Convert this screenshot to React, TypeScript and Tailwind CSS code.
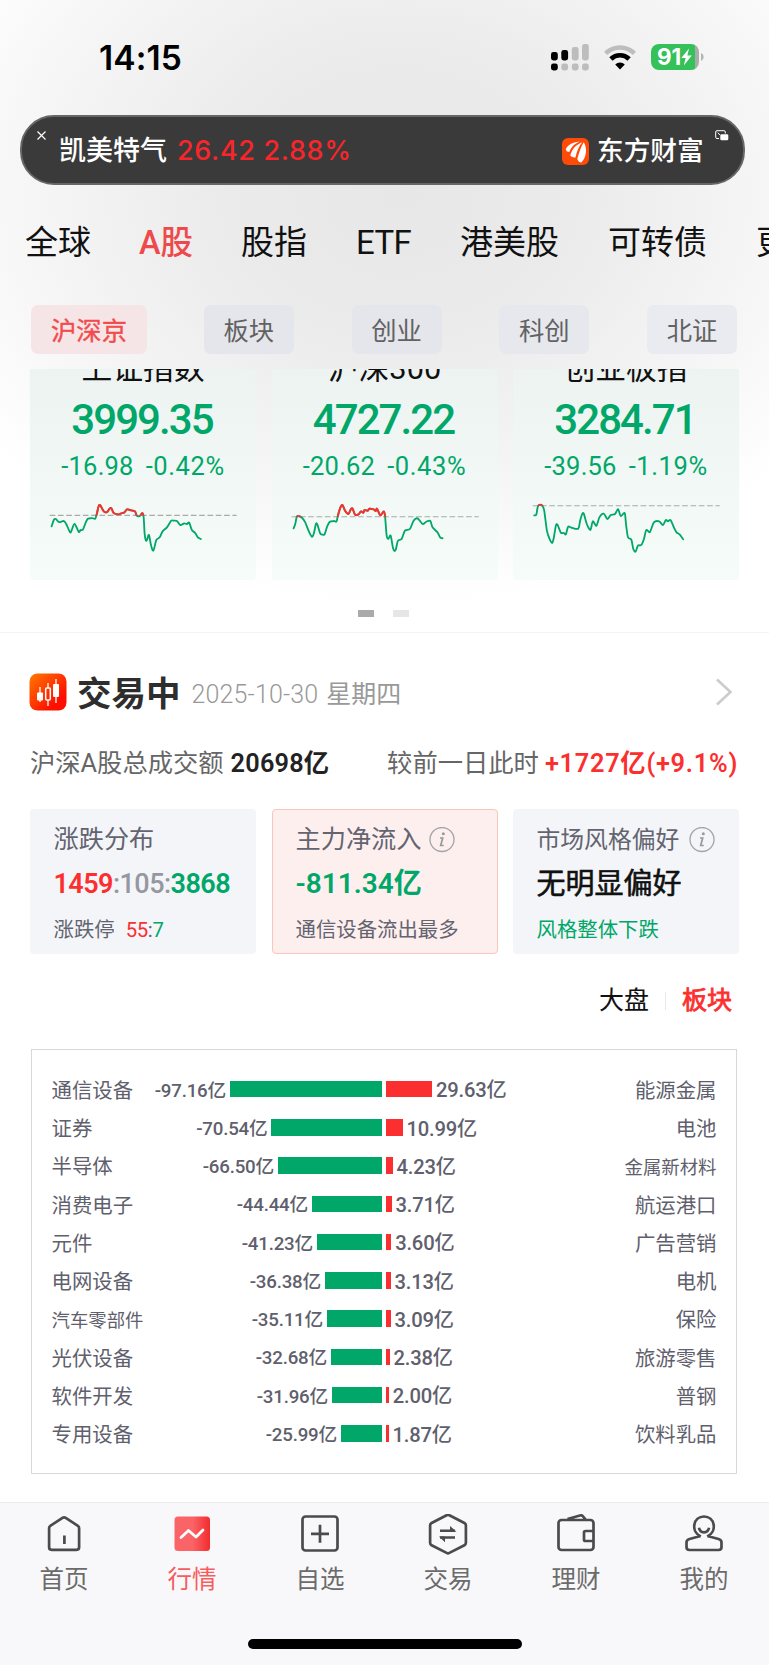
import React from 'react'

const categories = [
    { name: '全球', style: 'ml-[25px] w-[66px]' },
    { name: 'A股', style: 'ml-[48px] w-[54px] font-medium text-[32.500px] text-[#ee4a4c]' },
    { name: '股指', style: 'ml-[48px] w-[66px]' },
    { name: 'ETF', style: 'ml-[49px] w-[57px] tracking-[-0.6px]' },
    { name: '港美股', style: 'ml-[47px] w-[99px]' },
    { name: '可转债', style: 'ml-[49px] w-[99px]' },
    { name: '更多', style: 'ml-[49px] w-[66px]' },
];

const indices = [
    {
        name: '上证指数', price: '3999.35', change: '-16.98', percent: '-0.42%', left: 88, base: 464,
        points: '153,497 160,477 166,475 175,484 190,481 197,490 208,514 212,512 222,490 235,514 240,508 247,507 255,487 262,474 275,472 284,474 289,460 294,438 299,433 310,452 320,454 328,443 333,443 340,457 353,461 362,458 372,455 380,446 392,449 404,452 409,465 418,466 426,457 430,470 433,520 437,540 441,535 446,523 452,553 458,570 462,562 468,538 478,530 487,512 500,500 513,480 520,480 530,481 540,493 552,488 560,490 567,486 575,508 585,517 593,530 602,535',
    },
    {
        name: '沪深300', price: '4727.22', change: '-20.62', percent: '-0.43%', left: 812, base: 468,
        points: '877,503 882,490 886,470 890,466 902,471 912,485 922,510 932,528 938,518 944,490 948,490 956,516 960,521 970,521 978,497 986,483 998,481 1006,482 1011,462 1018,440 1024,433 1032,450 1042,460 1048,448 1054,443 1062,462 1072,461 1080,452 1087,456 1090,448 1100,450 1105,444 1118,446 1124,451 1128,444 1138,464 1148,452 1152,465 1157,525 1162,535 1169,525 1176,562 1181,571 1185,565 1191,540 1202,535 1212,510 1227,505 1238,480 1250,473 1265,490 1275,484 1288,480 1295,500 1310,515 1318,530 1325,533',
    },
    {
        name: '创业板指', price: '3284.71', change: '-39.56', percent: '-1.19%', left: 396, base: 435,
        points: '460,464 466,462 470,440 474,433 484,435 490,450 498,510 506,535 514,547 519,530 525,495 530,492 540,516 549,517 555,521 562,498 572,501 592,504 598,480 604,460 609,459 618,490 629,508 636,482 647,495 656,470 669,459 680,475 690,463 703,460 712,445 720,466 732,457 736,490 742,530 752,537 758,565 765,573 772,555 782,553 790,535 797,508 808,514 820,485 836,482 847,493 856,478 862,482 870,478 880,500 888,515 898,522 908,536',
    },
];

const flows = [
    { out: '通信设备', outValue: '-97.16亿', outBar: 152, inBar: 46.5, inValue: '29.63亿', name: '能源金属' },
    { out: '证券', outValue: '-70.54亿', outBar: 110.5, inBar: 17, inValue: '10.99亿', name: '电池' },
    { out: '半导体', outValue: '-66.50亿', outBar: 104, inBar: 7, inValue: '4.23亿', name: '金属新材料' },
    { out: '消费电子', outValue: '-44.44亿', outBar: 70, inBar: 6, inValue: '3.71亿', name: '航运港口' },
    { out: '元件', outValue: '-41.23亿', outBar: 65, inBar: 5.7, inValue: '3.60亿', name: '广告营销' },
    { out: '电网设备', outValue: '-36.38亿', outBar: 57, inBar: 5, inValue: '3.13亿', name: '电机' },
    { out: '汽车零部件', outValue: '-35.11亿', outBar: 55, inBar: 5, inValue: '3.09亿', name: '保险' },
    { out: '光伏设备', outValue: '-32.68亿', outBar: 51, inBar: 4, inValue: '2.38亿', name: '旅游零售' },
    { out: '软件开发', outValue: '-31.96亿', outBar: 50, inBar: 3.3, inValue: '2.00亿', name: '普钢' },
    { out: '专用设备', outValue: '-25.99亿', outBar: 41, inBar: 3, inValue: '1.87亿', name: '饮料乳品' },
];

// smooth curve through every point
const toPath = (points: string) => {
    const p = points.split(' ').map((s) => s.split(',').map(Number));
    let d = `M${p[0][0]} ${p[0][1]}`;
    for (let i = 0; i < p.length - 1; i++) {
        const a = p[i - 1] || p[i];
        const b = p[i];
        const c = p[i + 1];
        const e = p[i + 2] || c;
        d += `C${b[0] + (c[0] - a[0]) / 7} ${b[1] + (c[1] - a[1]) / 7} ${c[0] - (e[0] - b[0]) / 7} ${c[1] - (e[1] - b[1]) / 7} ${c[0]} ${c[1]}`;
    }
    return d;
};

const StatusBar = () => (
    <div className="flex h-[115px] items-start">
        <div className="ml-[99px] mt-[41px] w-[84px] text-[33.500px] font-semibold leading-[34px] tracking-[0.1px] text-black font-['Inter']">14:15</div>
        <svg className="ml-[368px] mt-[43px]" width="38" height="28" viewBox="0 0 38 28">
            <g fill="#000">
                <rect x="0" y="9" width="6.8" height="8.5" rx="2.4" />
                <rect x="10.3" y="7" width="6.8" height="10.5" rx="2.4" />
                <rect x="0" y="20.5" width="6.8" height="7" rx="2.4" />
            </g>
            <g fill="#bdbdbd">
                <rect x="20.8" y="4" width="6.8" height="13.5" rx="2.4" />
                <rect x="31" y="1" width="6.8" height="16.5" rx="2.4" />
                <rect x="10.3" y="20.5" width="6.8" height="7" rx="2.4" />
                <rect x="20.8" y="20.5" width="6.8" height="7" rx="2.4" />
                <rect x="31" y="20.5" width="6.8" height="7" rx="2.4" />
            </g>
        </svg>
        <svg className="ml-[15px] mt-[44px]" width="32" height="26" viewBox="0 0 32 26" fill="none">
            <path d="M1.6 9.4a20.5 20.5 0 0 1 28.8 0" stroke="#bdbdbd" strokeWidth="4.6" />
            <path d="M6.9 15a12.9 12.9 0 0 1 18.2 0" stroke="#000" strokeWidth="4.6" />
            <path d="M16 25.5l-4.8-5a6.8 6.8 0 0 1 9.6 0z" fill="#000" />
        </svg>
        <div className="ml-[15px] mt-[44px] flex h-[26px] w-[48px] items-center overflow-hidden rounded-[8px] bg-[linear-gradient(to_right,#34c159_91%,#a9acaa_91%)] pl-[6px]">
            <span className="text-[22.500px] font-bold leading-[26px] tracking-[-0.2px] text-white font-['Inter']">91</span>
            <svg width="11" height="18" viewBox="0 0 11 18">
                <path d="M8 .5L.3 10h4.3L2.800 17.500 10.800 7.600H6.400z" fill="#fff" />
            </svg>
        </div>
        <svg className="ml-[2px] mt-[53px]" width="3" height="8" viewBox="0 0 3 8">
            <path d="M0 0a4.300 4.300 0 0 1 0 8z" fill="#b5b5b5" />
        </svg>
    </div>
);

const TickerPill = () => (
    <div className="ml-5 flex h-[70px] w-[725px] items-start rounded-[34px] border-2 border-[#666] bg-[#3a3a3a] text-white">
        <svg className="ml-[15px] mt-[14px]" width="9" height="9" viewBox="0 0 9 9" stroke="#fff" strokeWidth="1.2">
            <path d="M.5 .5l8 8M8.500 .5l-8 8" />
        </svg>
        <div className="ml-[13px] mt-[16px] w-[118px] text-[27px] font-medium leading-[36px]">凯美特气</div>
        <div className="mt-[16px] w-[385px] text-[27px] font-medium leading-[36px] tracking-[0.65px] text-[#f8262a] font-['Inter']">26.42 2.88%</div>
        <svg className="mt-[21px]" width="27" height="27" viewBox="0 0 27 27">
            <rect width="27" height="27" rx="6" fill="#ff4a08" />
            <g fill="#fff">
                <path d="M3.800 11C6.500 6 12 3.700 18 3.700C13 5 9.500 8.500 7.300 14C5.300 14 3.900 13 3.800 11z" />
                <path d="M8.300 17.500C10 11 14 6.500 20.300 4.200C17 8 14.800 13 13.500 19.500C11.500 19.500 9.500 19 8.300 17.500z" />
                <path d="M15.300 21C17.300 14 18.800 8.500 21.800 4.200C25.200 10 25 18.500 19.300 24.500C17.500 24.300 15.800 23 15.300 21z" />
            </g>
        </svg>
        <div className="ml-[8px] mt-[16px] w-[108px] text-[26.700px] font-medium leading-[36px]">东方财富</div>
        <svg className="ml-[10px] mt-[13px]" width="14" height="11" viewBox="0 0 14 11">
            <path d="M4 8.500H2a1.300 1.300 0 0 1-1.300-1.300V2A1.300 1.300 0 0 1 2 .7h7A1.300 1.300 0 0 1 10.300 2v1.500M2.700 2.700l2.300 2.300" fill="none" stroke="#fff" />
            <rect x="5.300" y="4.300" width="8" height="6" rx="1.300" fill="#fff" />
        </svg>
    </div>
);

const IndexCard = ({ item }: { item: (typeof indices)[0] }) => (
    <div className="h-[211px] w-[226px] overflow-hidden rounded-b-[4px] bg-gradient-to-b from-[#edf3f1] to-[#f5fcf9] text-center text-[#00a768]">
        <div className="-mt-[15.500px] h-[30px] text-[30.800px] leading-[30px] text-[#111]">{item.name}</div>
        <div className="mt-[15px] h-[42px] text-[42px] font-medium leading-[42px] tracking-[-1.9px]"><span className="ml-[-2px]">{item.price}</span></div>
        <div className="mt-[12px] flex h-[26px] justify-center gap-[12px] text-[25.500px] leading-[26px] tracking-[0.2px]">
            <span>{item.change}</span>
            <span className="tracking-[0.6px]">{item.percent}</span>
        </div>
        <svg className="mt-[10px]" width="226" height="87" viewBox={`${item.left} 385 680 261`} fill="none">
            <clipPath id={`up${item.left}`}>
                <rect x={item.left} y="385" width="680" height={item.base - 385} />
            </clipPath>
            <path d={`M${item.left + 59} ${item.base}h563`} stroke="#aaa" strokeWidth="3.500" strokeDasharray="17 8" />
            <path d={toPath(item.points)} stroke="#00a768" strokeWidth="5.500" strokeLinecap="round" />
            <path d={toPath(item.points)} stroke="#fc2f2f" strokeWidth="6" strokeLinecap="round" clipPath={`url(#up${item.left})`} />
        </svg>
    </div>
);

const InfoIcon = () => (
    <svg width="26" height="26" viewBox="0 0 26 26" fill="none" stroke="#a3a3a8">
        <circle cx="13" cy="12.500" r="12" strokeWidth="1.300" />
        <circle cx="14.300" cy="6.700" r="1.500" fill="#999" stroke="none" />
        <path d="M11 11h2.700l-2 7.500h3" strokeWidth="1.700" stroke="#999" />
    </svg>
);

const tabs = [
    {
        label: '首页',
        icon: <path d="M4.500 14c0-1 .4-1.700 1.200-2.200l12.200-8a3 3 0 0 1 3.200 0l12.200 8c.8.500 1.200 1.200 1.200 2.200v19.300c0 1.500-.9 2.500-2.500 2.500H7c-1.600 0-2.500-1-2.500-2.500zM19.800 21.500v8.500" transform="translate(.6)" />,
    },
    {
        label: '行情',
        icon: (
            <>
                <rect x="2.500" y="2.500" width="35.500" height="34.500" rx="3.500" fill="url(#hot)" stroke="none" />
                <path d="M9 23.500l7.500-7 7.500 6.500 7-7" stroke="#fff" strokeWidth="2.800" strokeLinecap="round" />
            </>
        ),
    },
    { label: '自选', icon: <path d="M5.500 2.500h29a3 3 0 0 1 3 3v28a3 3 0 0 1-3 3h-29a3 3 0 0 1-3-3v-28a3 3 0 0 1 3-3zM11 19.800h18M20 10.800v18" /> },
    {
        label: '交易',
        icon: (
            <>
                <path d="M18.600 1.200a3 3 0 0 1 2.800 0l15 7.800c1 .6 1.500 1.400 1.500 2.500v17.300c0 1.100-.5 1.900-1.500 2.500l-15 7.600a3 3 0 0 1-2.800 0l-15-7.600c-1-.6-1.500-1.400-1.500-2.500V11.500c0-1.100.5-1.900 1.500-2.500z" />
                <path d="M12 16.700h15M12 23.500h15" strokeWidth="2.400" />
                <path d="M22 12l6.500 5.800H22zM17 28.300l-6-5.800h6z" fill="#4b4b4b" stroke="none" />
            </>
        ),
    },
    { label: '理财', icon: <path d="M5.500 6h29a3 3 0 0 1 3 3v24a3 3 0 0 1-3 3h-29a3 3 0 0 1-3-3V9a3 3 0 0 1 3-3zM11.500 5l12.500-3.500c1.500-.4 2.300-.2 3 .8l3 3.700M37.500 17h-8c-1 0-1.500.5-1.500 1.500v7c0 1 .5 1.500 1.500 1.500h8" /> },
    { label: '我的', icon: <path d="M16.500 22l-11 3c-1.800.5-3 1.700-3 3.500v4.500c0 2 1 3 3 3h29c2 0 3-1 3-3v-4.500c0-1.800-1.200-3-3-3.500l-11-3M16.800 22.500C6 17 9.500 2.500 20 2.500S34 17 23.200 22.500M15 13.800c1 6 9 6 10 0" /> },
];

const App = () => {
    return (
        <div className="flex h-[1665px] w-[769px] flex-col overflow-hidden bg-white text-[#111] font-['Roboto','Noto_Sans_CJK_SC',sans-serif]">
            <div className="h-[633px] shrink-0 border-b border-[#f4f4f4] bg-[radial-gradient(ellipse_510px_410px_at_52%_195px,#e7e7e7_0%,#ebebeb_35%,#f5f5f5_70%,#ffffff_100%)]">
                <StatusBar />
                <TickerPill />
                <div className="mt-[37px] flex h-[42px] w-[769px] overflow-hidden text-[33px] leading-[42px]">
                    {categories.map((c) => (
                        <div key={c.name} className={`shrink-0 whitespace-nowrap ${c.style}`}>{c.name}</div>
                    ))}
                </div>
                <div className="mt-[41px] flex h-[49px] justify-between pl-[31px] pr-[32px] text-[25.300px] leading-[53px] text-[#626262]">
                    <div className="w-[116px] rounded-[7px] bg-[#f5e5e6] text-center text-[#f24c4e] [-webkit-text-stroke:0.4px]">沪深京</div>
                    <div className="ml-[-1px] w-[90px] rounded-[7px] bg-[#e4e6eb] text-center">板块</div>
                    <div className="w-[90px] rounded-[7px] bg-[#e4e6eb] text-center">创业</div>
                    <div className="w-[90px] rounded-[7px] bg-[#e6e8ed] text-center">科创</div>
                    <div className="w-[90px] rounded-[7px] bg-[#e9ebf0] text-center">北证</div>
                </div>
                <div className="mt-[15px] flex justify-between pl-[30px] pr-[30px]">
                    {indices.map((item) => <IndexCard key={item.name} item={item} />)}
                </div>
                <div className="mt-[30px] flex justify-center gap-[19px] pr-[2px]">
                    <div className="h-[6.500px] w-4 bg-[#aaa]" />
                    <div className="h-[6.500px] w-4 bg-[#e6e6e6]" />
                </div>
            </div>

            <div className="mt-[40px] flex h-[38px] shrink-0 items-center px-[29px]">
                <svg width="38" height="38" viewBox="0 0 38 38">
                    <defs>
                        <linearGradient id="trade" x1="0" y1="0" x2="1" y2="1">
                            <stop offset="0" stopColor="#ff7a00" />
                            <stop offset=".75" stopColor="#ff0f00" />
                        </linearGradient>
                    </defs>
                    <rect x=".5" y=".5" width="37" height="37" rx="8" fill="url(#trade)" />
                    <path d="M11 14v15M19 10v5M19 27v6M27 6v24" stroke="#fff" strokeWidth="1.300" />
                    <rect x="8" y="19.500" width="6" height="8" rx="1" fill="#fff" />
                    <rect x="16.700" y="15" width="4.600" height="12" rx="1" fill="none" stroke="#fff" strokeWidth="1.500" />
                    <rect x="24" y="11" width="6" height="13" rx="1" fill="#fff" />
                </svg>
                <span className="ml-[10px] mt-[3px] text-[34.500px] font-bold leading-[38px] text-[#2e2e2e]">交易中</span>
                <span className="ml-[11px] mt-[5px] text-[25px] leading-[38px] text-[#999]"><span className="font-light tracking-[0.15px]">2025-10-30</span><span className="ml-[8px]">星期四</span></span>
                <svg className="ml-auto mr-[7px]" width="18" height="28" viewBox="0 0 18 28" fill="none">
                    <path d="M2 1.500l13.500 12.500L2 26.500" stroke="#ccc" strokeWidth="2.600" />
                </svg>
            </div>
            <div className="mt-[36px] flex h-[34px] shrink-0 items-center pl-[30px] pr-[31px] text-[25.300px] leading-[34px]">
                <span className="text-[#666]">沪深A股总成交额</span>
                <b className="ml-[7px] font-semibold tracking-[0.2px] text-[#222]">20698亿</b>
                <span className="ml-auto text-[#666]">较前一日此时</span>
                <b className="ml-[6px] font-semibold tracking-[0.75px] text-[#fc2f2f]">+1727亿(+9.1%)</b>
            </div>

            <div className="mt-[28px] flex h-[145px] shrink-0 justify-between pl-[30px] pr-[30px] text-[#63646f]">
                <div className="w-[226px] rounded-[4px] bg-[#f3f5f9] pl-[23.500px] pt-[16px]">
                    <div className="text-[25.200px] leading-[30px]">涨跌分布</div>
                    <div className="mt-[12px] text-[27px] font-semibold leading-[34px] tracking-[-0.55px] text-[#96979f]">
                        <span className="text-[#fc2f2f]">1459</span><span className="font-medium">:105:</span><span className="text-[#00a768]">3868</span>
                    </div>
                    <div className="mt-[14px] text-[20.400px] leading-[30px]">涨跌停 <span className="ml-[6px] tracking-[-0.4px]"><span className="text-[#fc2f2f]">55</span>:<span className="text-[#00a768]">7</span></span></div>
                </div>
                <div className="w-[226px] rounded-[4px] border-[1.500px] border-[#fbc5b9] bg-[#feefef] pl-[23px] pt-[15px]">
                    <div className="flex items-center gap-[8px] text-[25.200px] leading-[30px]">主力净流入 <InfoIcon /></div>
                    <div className="mt-[12px] text-[28px] font-semibold leading-[34px] text-[#00a768]">-811.34亿</div>
                    <div className="mt-[14px] text-[20.400px] leading-[30px]">通信设备流出最多</div>
                </div>
                <div className="w-[226px] rounded-[4px] bg-[#f3f5f9] pl-[23.500px] pt-[16px]">
                    <div className="flex items-center gap-[10px] text-[23.800px] leading-[30px]">市场风格偏好 <InfoIcon /></div>
                    <div className="mt-[12px] text-[29px] leading-[34px] text-[#111] [-webkit-text-stroke:0.6px]">无明显偏好</div>
                    <div className="mt-[14px] text-[20.400px] leading-[30px] text-[#00a768]">风格整体下跌</div>
                </div>
            </div>

            <div className="mt-[31px] flex h-[32px] shrink-0 items-center justify-end pr-[37px] text-[25px] leading-[32px]">
                <span>大盘</span>
                <span className="mx-[16px] h-[18px] w-px bg-[#e8e8ec]" />
                <b className="font-normal text-[#fc2f2f] [-webkit-text-stroke:0.8px]">板块</b>
            </div>

            <div className="ml-[31px] mt-[32px] h-[425px] w-[706px] shrink-0 border border-[#d6d7df] px-[19.500px] pt-[20px] text-[20.400px] text-[#5f606d]">
                {flows.map((f) => (
                    <div key={f.out} className="flex h-[38.250px] items-center">
                        <div className={f.out.length > 4 ? 'mt-[4px] w-[100px] text-[18.400px]' : 'mt-[4px] w-[100px]'}>{f.out}</div>
                        <div className="flex w-[230px] items-center justify-end">
                            <span className="mr-[3.500px] mt-[3px] whitespace-nowrap text-[18.700px] font-medium tracking-[-0.2px]">{f.outValue}</span>
                            <span className="h-[16.500px] bg-[#00a768]" style={{ width: f.outBar }} />
                        </div>
                        <div className="ml-[4px] flex items-center">
                            <span className="h-[16.500px] bg-[#fb2f30]" style={{ width: f.inBar }} />
                            <span className="ml-[4px] mt-[3px] text-[20.200px] font-medium tracking-[-0.2px]">{f.inValue}</span>
                        </div>
                        <div className={f.name.length > 4 ? 'ml-auto mt-[4px] text-[18.400px]' : 'ml-auto mt-[4px]'}>{f.name}</div>
                    </div>
                ))}
            </div>

            <div className="mt-auto h-[163px] shrink-0 border-t border-[#ececee] bg-[#f8f8fa]">
                <div className="flex pt-[10.500px]">
                    {tabs.map((t) => (
                        <div key={t.label} className={t.label === '行情' ? 'flex w-[128px] flex-col items-center text-[#f75c5e]' : 'flex w-[128px] flex-col items-center text-[#6b6b6b]'}>
                            <svg width="40" height="42" viewBox="0 0 40 42" fill="none" stroke="#4b4b4b" strokeWidth="2.700" strokeLinejoin="round">
                                <linearGradient id="hot">
                                    <stop offset=".5" stopColor="#fb6467" />
                                    <stop offset="1" stopColor="#f22c2e" />
                                </linearGradient>
                                {t.icon}
                            </svg>
                            <span className="mt-[8.500px] text-[24.500px] leading-[32px]">{t.label}</span>
                        </div>
                    ))}
                </div>
                <div className="mx-auto mt-[43px] h-[10px] w-[274px] rounded-full bg-black" />
            </div>
        </div>
    )
}

export default App;
